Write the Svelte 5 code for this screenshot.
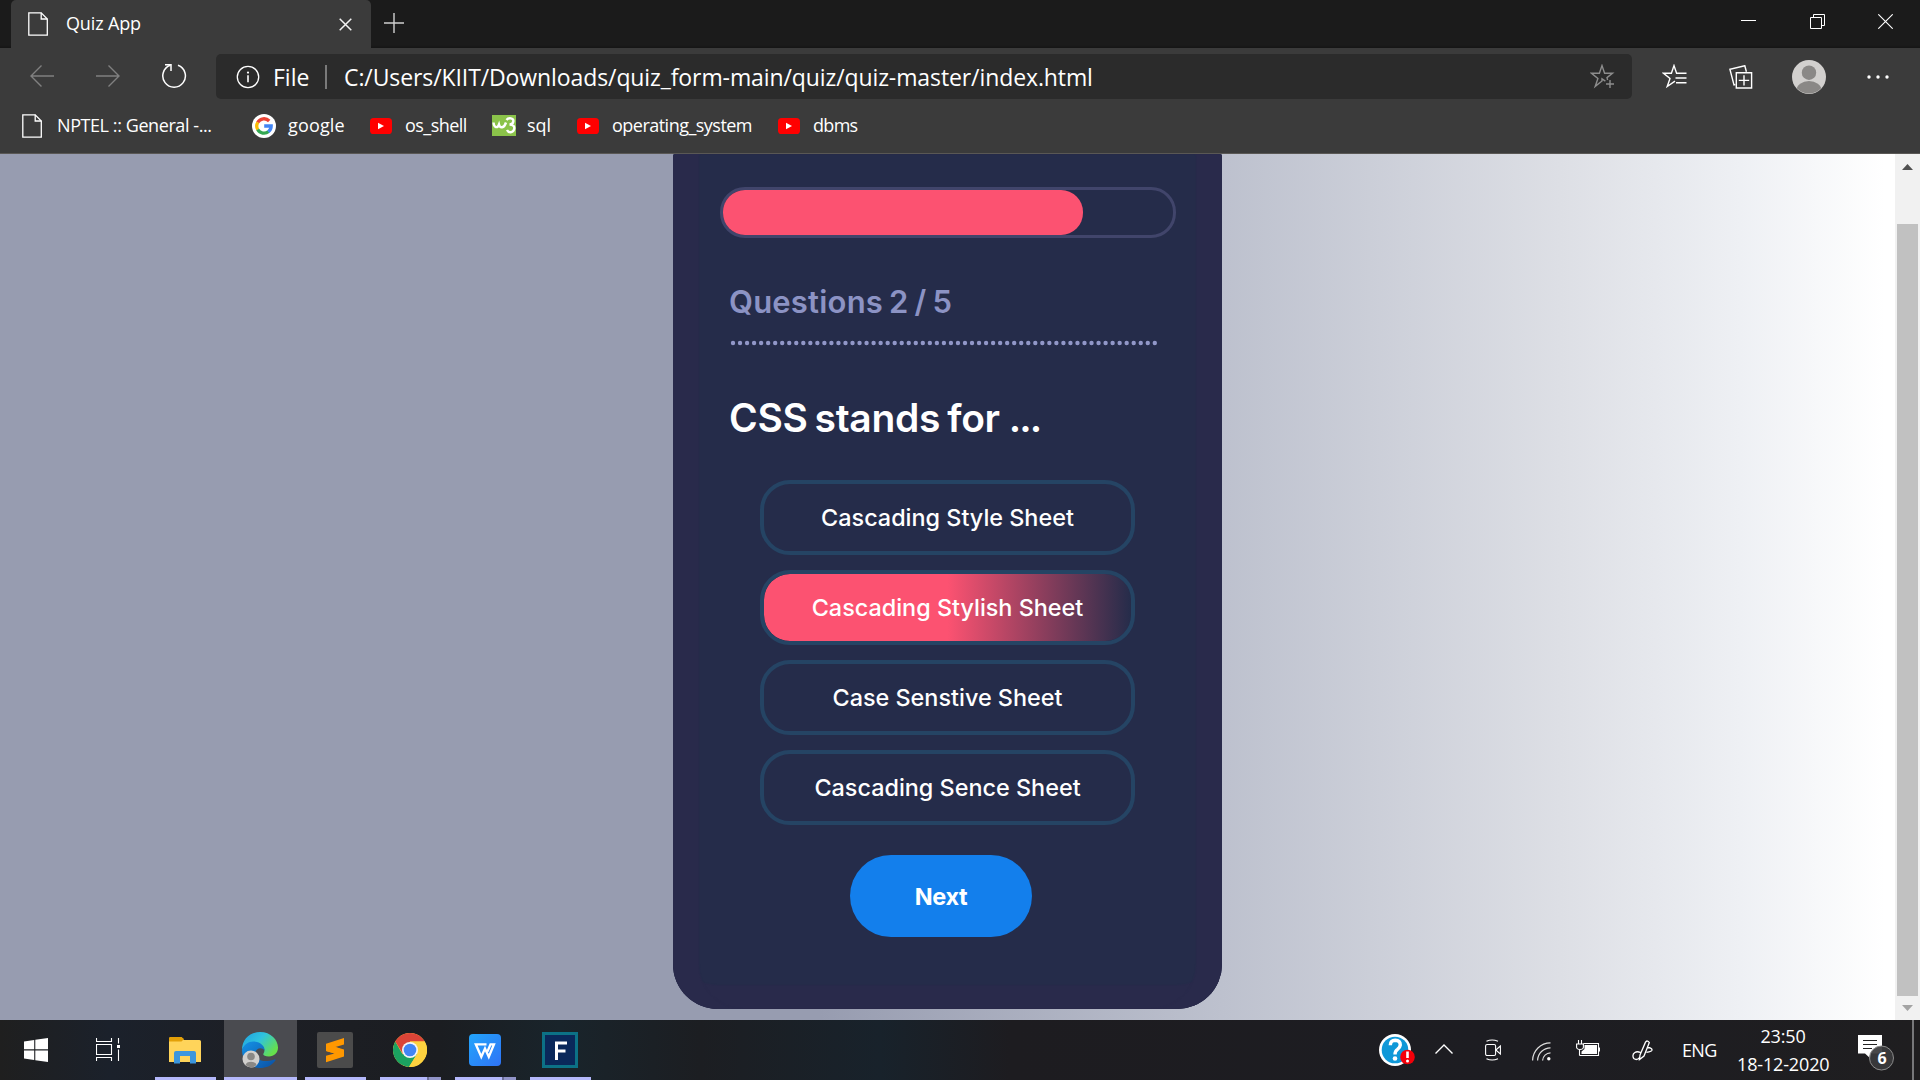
<script>
  const options = [
    { text: 'Cascading Style Sheet', chosen: false },
    { text: 'Cascading Stylish Sheet', chosen: true },
    { text: 'Case Senstive Sheet', chosen: false },
    { text: 'Cascading Sence Sheet', chosen: false }
  ];
  const progress = 80;
</script>

{#snippet page()}
  <svg class="page-icon" viewBox="0 0 20 24" width="20" height="24" fill="none" stroke="#fff" stroke-width="1.3">
    <path d="M.8.8H13.2L19.3 7V23.2H.8Z" />
    <path d="M13.2.8V7H19.3" />
  </svg>
{/snippet}

{#snippet youtube()}
  <svg class="yt" viewBox="0 0 22 16" width="22" height="16">
    <rect width="22" height="16" rx="3.6" fill="#f00" />
    <path d="M8 4.7L14 8L8 11.3Z" fill="#fff" />
  </svg>
{/snippet}

<div class="screen">
  <header class="titlebar">
    <div class="tab">
      {@render page()}
      <span class="tab-title">Quiz App</span>
      <svg class="tab-close" width="13" height="13" viewBox="0 0 13 13" stroke="#f4f4f4" stroke-width="1.5"><path d="M.7.7L12.3 12.3M12.3.7L.7 12.3" /></svg>
    </div>
    <svg class="new-tab" width="20" height="20" viewBox="0 0 20 20" stroke="#d0d0d0" stroke-width="1.4"><path d="M10 0V20M0 10H20" /></svg>
    <div class="window-buttons">
      <svg width="15" height="15" viewBox="0 0 15 15" stroke="#fff"><path d="M0 6.5H15" /></svg>
      <svg width="15" height="15" viewBox="0 0 15 15" fill="none" stroke="#fff"><path d="M.5 3.5H11.5V14.5H.5ZM3.5 3.5V.5H14.5V11.5H11.5" /></svg>
      <svg width="15" height="15" viewBox="0 0 15 15" stroke="#fff" stroke-width="1.1"><path d="M.3.3L14.7 14.7M14.7.3L.3 14.7" /></svg>
    </div>
  </header>

  <div class="toolbar">
    <svg class="back" width="24" height="22" viewBox="0 0 24 22" fill="none" stroke="#808080" stroke-width="1.4"><path d="M11.5.5L1 11L11.5 21.5M1 11H24" /></svg>
    <svg class="forward" width="24" height="22" viewBox="0 0 24 22" fill="none" stroke="#808080" stroke-width="1.4"><path d="M12.5.5L23 11L12.5 21.5M23 11H0" /></svg>
    <svg class="reload" width="26" height="26" viewBox="0 0 26 26" fill="none" stroke="#fff" stroke-width="1.5"><path d="M17 2.3A11.3 11.3 0 1 1 9.2 2.3" /><path d="M4 1.8H10V8" /></svg>
    <div class="address">
      <svg class="info" width="24" height="24" viewBox="0 0 24 24" fill="none" stroke="#fff" stroke-width="1.3"><circle cx="12" cy="12" r="10.7" /><path d="M12 10.2V17.2" stroke-width="1.6" /><circle cx="12" cy="7.6" r="1.1" fill="#fff" stroke="none" /></svg>
      <span class="scheme">File</span>
      <span class="divider"></span>
      <span class="url">C:/Users/KIIT/Downloads/quiz_form-main/quiz/quiz-master/index.html</span>
      <svg class="star" width="25" height="25" viewBox="0 0 25 25" fill="none" stroke="#8d8d8d" stroke-width="1.4"><path d="M15.4 17.1L12 14.8V17L5.2 22.4L7.9 14.5L1.5 9.3H9.4L12 1.6L14.6 9.3H22.5L17 13.6L17.6 16" /><path d="M20 16V24M16 20H24" /></svg>
    </div>
    <svg class="favorites" width="25" height="25" viewBox="0 0 25 25" fill="none" stroke="#fff" stroke-width="1.4"><path d="M13 17.2L5.2 22.5L8 14.5L1.5 9.3H9.4L12 1.6L14.6 9.3H24.5M13.5 14H24.5M14 18.8H24.5" /></svg>
    <svg class="collections" width="24" height="24" viewBox="0 0 24 24" fill="none" stroke="#fff" stroke-width="1.4"><path d="M7.3 7.7H22.6V23H7.3ZM15 10.2V20.5M9.8 15.4H20.2" /><path d="M6.4 19.6L5 20L.9 4.3L15.8.7L17.4 6.8" /></svg>
    <svg class="avatar" width="34" height="34" viewBox="0 0 34 34"><defs><clipPath id="avatar-clip"><circle cx="17" cy="17" r="16.5" /></clipPath></defs><circle cx="17" cy="17" r="17" fill="#d2d0ce" /><circle cx="17" cy="12.7" r="7.2" fill="#8a8886" /><ellipse cx="17" cy="30" rx="12.5" ry="9" fill="#8a8886" clip-path="url(#avatar-clip)" /></svg>
    <svg class="more" width="22" height="4" viewBox="0 0 22 4" fill="#fff"><circle cx="2" cy="2" r="1.7" /><circle cx="11" cy="2" r="1.7" /><circle cx="20" cy="2" r="1.7" /></svg>
  </div>

  <nav class="bookmarks">
    <span class="bm nptel">{@render page()}<span>NPTEL :: General -...</span></span>
    <span class="bm google">
      <svg width="24" height="24" viewBox="0 0 24 24" fill="none" stroke-width="3.3"><circle cx="12" cy="12" r="12" fill="#fff" /><path d="M17.2 7A7.2 7.2 0 0 0 5.7 8.5" stroke="#ea4335" /><path d="M5.8 8.3A7.2 7.2 0 0 0 5.8 15.7" stroke="#fbbc05" /><path d="M5.7 15.5A7.2 7.2 0 0 0 16.6 17.5" stroke="#34a853" /><path d="M16.4 17.7A7.2 7.2 0 0 0 19.2 12H12.2" stroke="#4285f4" /></svg>
      <span>google</span>
    </span>
    <span class="bm shell">{@render youtube()}<span>os_shell</span></span>
    <span class="bm sql">
      <svg width="24" height="21" viewBox="0 0 24 21" fill="none"><rect width="24" height="21" fill="#8bc34a" /><path d="M1.5 7.5C2 13 5.500 13.500 7 9.500C8 13.500 12 13.500 14 7.500" stroke="#fff" stroke-width="2.4" /><path d="M14.500 5C16.500 2.300 22 3 21.300 6.500C21 8.500 19.500 9.500 17.500 9.500C21.500 9.500 23 12 22 14.500C21 18 16.500 18 15 15" stroke="#fff" stroke-width="2.4" /></svg>
      <span>sql</span>
    </span>
    <span class="bm os">{@render youtube()}<span>operating_system</span></span>
    <span class="bm dbms">{@render youtube()}<span>dbms</span></span>
  </nav>

  <main class="viewport">
    <section class="quiz">
      <div class="progress"><div class="fill" style="width:{progress}%"></div></div>
      <h2>Questions 2 / 5</h2>
      <svg class="dots" width="428" height="6" viewBox="0 0 428 6"><path d="M3 3H426" stroke="#9197c8" stroke-width="4.4" stroke-linecap="round" stroke-dasharray="0 7.03" /></svg>
      <h1>CSS stands for <span>...</span></h1>
      <div class="options">
        {#each options as option}
          <button class="option" class:chosen={option.chosen}>{option.text}</button>
        {/each}
      </div>
      <button class="next">Next</button>
    </section>
    <aside class="scrollbar">
      <svg width="11" height="6" viewBox="0 0 11 6"><path d="M5.5 0L11 6H0Z" fill="#505050" /></svg>
      <div class="thumb"></div>
      <svg width="11" height="6" viewBox="0 0 11 6"><path d="M5.500 6L11 0H0Z" fill="#a3a3a3" /></svg>
    </aside>
  </main>

  <footer class="taskbar">
    <div class="slot start">
      <svg width="24" height="24" viewBox="0 0 24 24" fill="#fff"><path d="M0 3.500L10.200 2V11.300H0ZM11.300 1.800L24 0V11.300H11.300ZM0 12.400H10.200V21.900L0 20.500ZM11.300 12.400H24V24L11.300 22.200Z" /></svg>
    </div>
    <div class="slot view">
      <svg width="25" height="24" viewBox="0 0 25 24" fill="none" stroke="#fff" stroke-width="1.100"><path d="M.5 0V3.500H15.500V0M.5 6.500H15.500V16.500H.5ZM.5 23V19.500H15.500V23M22.500 0V5.500M22.500 11.500V23" /><path d="M21 7H24V10H21Z" fill="#fff" stroke="none" /></svg>
    </div>
    <div class="slot app">
      <svg width="32" height="27" viewBox="0 0 32 27"><path d="M0 2Q0 0 2 0H12L15 3H30.500Q32 3 32 4.500V25H0Z" fill="#ffd45a" /><path d="M0 4.500V1.500Q0 0 1.500 0H12.500L15 2L12.500 4.500Z" fill="#e3a008" /><path d="M5 26.500V16Q5 14 7 14H25Q27 14 27 16V26.500H21V19H11V26.500Z" fill="#3c96dd" /></svg>
      <i></i>
    </div>
    <div class="slot app active">
      <svg width="36" height="36" viewBox="0 0 36 36">
        <defs>
          <linearGradient id="edge-top" x1="0" y1="0" x2="1" y2=".6"><stop offset="0" stop-color="#1f9fe0" /><stop offset=".5" stop-color="#2fc3df" /><stop offset="1" stop-color="#66e04c" /></linearGradient>
          <linearGradient id="edge-low" x1="0" y1="0" x2="1" y2="1"><stop offset="0" stop-color="#1492e6" /><stop offset="1" stop-color="#0b50a4" /></linearGradient>
        </defs>
        <path d="M0 18C0 7 8 0 18 0C29 0 36 8 36 15.500C36 21 32 24.500 27 24.500C22.500 24.500 20.500 23 21.500 21.500C24.500 17 20 12 13 11C7 10.500 2 13 0 18Z" fill="url(#edge-top)" />
        <path d="M0 18C2 11 9 8 15 10C20 11.500 23 15 22.500 18.500C20 14.500 14 16 13 21C12 27 20 31.500 32.500 27.500C33.500 27 34 28 33 29C29 34 24 36 18 36C7 36 0 28 0 18Z" fill="url(#edge-low)" />
        <circle cx="9" cy="27" r="8.500" fill="#d2d0ce" /><circle cx="9" cy="24.500" r="3.800" fill="#8a8886" /><path d="M3.500 33C4 28.500 14 28.500 14.500 33Q9 37.500 3.500 33Z" fill="#8a8886" />
      </svg>
      <i></i>
    </div>
    <div class="slot app">
      <svg width="36" height="36" viewBox="0 0 36 36"><rect width="36" height="36" rx="2" fill="#4b4b4b" /><path d="M27 6L9 11.800V19L17.500 21.500L9 23.800V30.200L27 24.500V17.500L18.500 15L27 12.500Z" fill="#ff9800" /><path d="M9 19L17.500 21.500L27 18.500L18.500 15L9 16.500Z" fill="#ff9800" /></svg>
      <i></i>
    </div>
    <div class="slot app">
      <svg width="34" height="34" viewBox="0 0 34 34"><circle cx="17" cy="17" r="17" fill="#fdd23f" /><path d="M17 17L9.500 21.300L2.280 8.500A17 17 0 0 0 16 34L24 21Z" fill="#1ba260" /><path d="M2.280 8.500A17 17 0 0 1 31.700 8.500H17L10 21Z" fill="#db4437" /><path d="M17 17L24 21L16 34A17 17 0 0 0 31.700 8.500H17Z" fill="#fdd23f" /><circle cx="17" cy="17" r="8" fill="#f5f5f5" /><circle cx="17" cy="17" r="6.300" fill="#4285f4" /></svg>
      <i class="stacked"></i>
    </div>
    <div class="slot app">
      <svg width="32" height="32" viewBox="0 0 32 32"><defs><linearGradient id="wps" x2="1" y2="1"><stop stop-color="#22a5fb" /><stop offset="1" stop-color="#2f73f6" /></linearGradient></defs><rect width="32" height="32" rx="4" fill="url(#wps)" /><path d="M17.500 10.300H6.800L12.300 22.800L16 14.500L19.800 22.800L25 10.300H21.500L18.500 17.500" fill="none" stroke="#fff" stroke-width="2.300" /></svg>
      <i class="stacked"></i>
    </div>
    <div class="slot app">
      <svg width="36" height="36" viewBox="0 0 36 36"><rect x="1.500" y="1.500" width="33" height="33" fill="#0a285a" stroke="#0c7186" stroke-width="3" /><path d="M14.500 28V11H25M14.500 19H23.500" fill="none" stroke="#fff" stroke-width="3" /></svg>
      <i></i>
    </div>

    <div class="tray">
      <svg class="help" width="37" height="36" viewBox="0 0 37 36"><circle cx="16" cy="18" r="16" fill="#fff" /><circle cx="16" cy="18" r="13.300" fill="#0f98d8" /><path d="M11.300 13.200Q11.500 8.300 16.200 8.300Q21.300 8.500 21.300 13Q21 15.500 18.500 17.300Q16 19 16 22.500" fill="none" stroke="#fff" stroke-width="3.400" /><circle cx="16" cy="26.500" r="2.300" fill="#fff" /><circle cx="28.500" cy="25" r="7.300" fill="#f40009" /><path d="M28.500 19.500V26" stroke="#fff" stroke-width="2.600" /><circle cx="28.500" cy="29" r="1.500" fill="#fff" /></svg>
      <svg class="chevron" width="18" height="10" viewBox="0 0 18 10" fill="none" stroke="#fff" stroke-width="1.400"><path d="M.5 9.500L9 1L17.500 9.500" /></svg>
      <svg class="camera" width="16" height="22" viewBox="0 0 16 22" fill="none" stroke="#fff" stroke-width="1.100"><rect x=".6" y="5.500" width="10" height="11" rx="1.500" /><path d="M10.800 11L15.400 7V15ZM1.500 2.200Q7 -.3 13 2.200M1.500 19.800Q7 22.300 13 19.800" /></svg>
      <svg class="wifi" width="19" height="19" viewBox="0 0 19 19" fill="none" stroke="#ddd" stroke-width="1.200"><path d="M.6 18.500A18 18 0 0 1 18.500 .8M5.600 18.500A13 13 0 0 1 18.500 5.800M10.600 18.500A8 8 0 0 1 18.500 10.800" /><circle cx="16.800" cy="16.800" r="1.700" fill="#fff" stroke="none" /></svg>
      <svg class="battery" width="24" height="18" viewBox="0 0 24 18" fill="none" stroke="#fff" stroke-width="1.100"><path d="M2.500 0V4M5.500 0V4M.6 4H7.400V7.500Q7 9.500 4 9.500Q1 9.500 .6 7.500ZM3.500 9.500V15.500M7.500 3.500H22.500V15.500H3.500M23.500 7.500V11.500" /><path d="M8.500 5H21V14H5.500V11.500L8.500 9Z" fill="#fff" stroke="none" /></svg>
      <svg class="pen" width="21" height="21" viewBox="0 0 21 21" fill="none" stroke="#fff" stroke-width="1.300"><path d="M7.500 19.500L8 15L13.500 2.200Q15.500 -.3 17.300 2.500L12 16ZM8.500 12.500C4 10.500 .5 13 1 16.500C1.500 20 5.500 20.500 7.500 17.500M15.500 7.500C19 7.500 20.500 9 19.800 10.500C19 12 16.500 11.500 14.500 12.500" /></svg>
      <span class="lang">ENG</span>
      <div class="clock"><span class="time">23:50</span><span class="date">18-12-2020</span></div>
      <div class="action">
        <svg width="36" height="36" viewBox="0 0 36 36"><path d="M0 0H24V18.500H13V24L7 18.500H0Z" fill="#fff" /><path d="M5 5.500H19M5 9.500H19M5 13.500H14" stroke="#222" stroke-width="1.100" /><circle cx="23.500" cy="23" r="12" fill="#3a3a3c" fill-opacity=".93" stroke="#8b8b8b" /></svg>
        <b>6</b>
      </div>
      <span class="peek"></span>
    </div>
  </footer>
</div>

<style>
  :global(body) { margin: 0; overflow: hidden; background: #1b1b1b; }
  svg { display: block; flex: none; }
  span { white-space: nowrap; }
  .screen { width: 1920px; height: 1080px; display: flex; flex-direction: column; overflow: hidden; font-family: 'Open Sans', 'Noto Sans', sans-serif; color: #fff; }

  .titlebar { height: 48px; flex: none; display: flex; align-items: flex-start; background: linear-gradient(#1b1b1b 45px, #151515); }
  .tab { box-sizing: border-box; width: 360px; height: 48px; margin-left: 11px; padding: 0 19px 0 17px; display: flex; align-items: center; background: #3b3b3b; border-radius: 5px 5px 0 0; }
  .tab-title { margin: -2px auto 0 18px; font-size: 18px; letter-spacing: -.15px; }
  .new-tab { margin: 13px 0 0 13px; }
  .window-buttons { display: flex; gap: 53.500px; margin: 14px 27px 0 auto; }

  .toolbar { height: 51px; flex: none; box-sizing: border-box; padding: 6px 31px 0 30px; display: flex; align-items: center; background: #3b3b3b; }
  .back { margin-right: 42px; }
  .forward { margin-right: 41px; }
  .reload { margin-right: 29px; }
  .back, .forward, .reload { margin-top: -2px; }
  .address { flex: none; box-sizing: border-box; width: 1416px; height: 45px; padding: 0 17px 0 20px; display: flex; align-items: center; background: #2b2b2b; border-radius: 5px; font-size: 23px; }
  .scheme { margin-left: 13px; width: 38px; }
  .divider { width: 2px; height: 24px; margin: 0 17px 0 14px; background: #7a7a7a; }
  .url { letter-spacing: -.1px; margin-right: auto; }
  .favorites { margin-left: 30px; }
  .collections { margin-left: 42px; }
  .avatar { margin-left: 39px; }
  .more { margin-left: 41px; }

  .bookmarks { height: 55px; flex: none; box-sizing: border-box; padding: 0 0 1px 22px; display: flex; align-items: center; background: #3b3b3b; border-bottom: 1px solid #5a5855; font-size: 18px; }
  .bm { display: flex; align-items: center; flex: none; }
  .bm > span { margin-top: -1px; }
  .nptel { width: 230px; gap: 15px; letter-spacing: -.42px; }
  .google { width: 118px; gap: 12px; letter-spacing: .15px; }
  .shell { width: 122px; gap: 13px; letter-spacing: -.55px; }
  .sql { width: 85px; gap: 11px; letter-spacing: -.1px; }
  .os { width: 201px; gap: 13px; letter-spacing: -.52px; }
  .dbms { gap: 13px; letter-spacing: -.7px; }

  .viewport { height: 866px; flex: none; display: flex; background: linear-gradient(90deg, #979cb0 0, #979cb0 820px, #bdc1ce 1222px, #dddfe5 1560px, #eef0f4 1740px, #fff 1885px); }
  .quiz { box-sizing: border-box; width: 549px; height: 855px; margin-left: 673px; padding: 33px 46px 0 47px; background: #252c4a; border-radius: 2px 2px 45px 45px; box-shadow: inset 26px 0 1px #292a4b, inset -26px 0 1px #292a4b, inset 0 -24px 1px #292a4b; font-family: Inter, sans-serif; }
  .progress { box-sizing: border-box; height: 51px; border: 3px solid #41456b; border-radius: 25px; }
  .fill { height: 100%; background: #fc5271; border-radius: 22px; }
  h2 { margin: 44px 0 0 9px; font-size: 31px; line-height: 40px; font-weight: 600; letter-spacing: .2px; word-spacing: -2px; color: #8c93c4; }
  .dots { margin: 18px 0 0 10px; }
  h1 { margin: 47px 0 0 9px; font-size: 39px; line-height: 50px; font-weight: 600; letter-spacing: -.3px; word-spacing: -2.500px; white-space: nowrap; }
  h1 span { letter-spacing: -2px; margin-left: 2px; }
  button { display: block; border: 0; padding: 0; color: #fff; font-family: inherit; font-size: 23.500px; }
  .options { margin: 37px 0 0 40px; width: 375px; display: flex; flex-direction: column; gap: 15px; }
  .option { height: 75px; border: 4px solid #254464; border-radius: 30px; background: none; font-weight: 500; font-size: 23.400px; }
  .chosen { background: linear-gradient(90deg, #fc5271 50%, #252c4a) padding-box; }
  .next { width: 182px; height: 82px; margin: 30px 0 0 130px; border-radius: 41px; background: #137fec; font-weight: 700; letter-spacing: -.4px; }

  .scrollbar { box-sizing: border-box; width: 25px; margin-left: auto; padding: 10px 1px 9px 0; background: #f1f1f1; display: flex; flex-direction: column; align-items: center; }
  .thumb { width: 21px; height: 772px; margin: 54px 0 9px; background: #c1c1c1; }

  .taskbar { height: 60px; flex: none; display: flex; background: linear-gradient(90deg, #1f1f1f 0, #1b212b 110px, #1d1f25 260px, #1b1d21 440px, #19242b 560px, #1c1e22 700px, #18222b 880px, #1d1c20 1010px, #1d1d22 1500px, #1f1e20 1920px); }
  .slot { box-sizing: border-box; width: 73px; height: 60px; display: flex; flex-direction: column; align-items: center; justify-content: center; position: relative; flex: none; }
  .start { width: 72px; }
  .view { width: 77px; padding-right: 4px; }
  .app { margin-right: 2px; padding-right: 1px; }
  .active { background: #4a4b50; }
  .slot i { position: absolute; left: 6px; right: 6px; bottom: 0; height: 3px; background: #b4b8fb; }
  .active i { left: 0; right: 0; }
  .slot .stacked { background: linear-gradient(90deg, #b4b8fb 47px, #6c6f97 47px 49px, #9194c8 49px); }
  .tray { flex: none; margin-left: auto; width: 541px; height: 60px; display: flex; align-items: center; }
  .chevron { margin: -3px 0 0 19px; }
  .camera { margin-left: 32px; }
  .wifi { margin: 2px 0 0 31px; }
  .battery { margin: -2px 0 0 25px; }
  .pen { margin-left: 32px; }
  .lang { margin-left: 29px; font-size: 18px; letter-spacing: -.7px; width: 36px; }
  .clock { margin-left: 19px; width: 92px; text-align: center; display: flex; flex-direction: column; line-height: 28px; font-size: 18px; letter-spacing: -.15px; }
  .action { position: relative; margin: 6px 0 0 29px; }
  .action b { position: absolute; left: 12px; top: 11px; width: 24px; text-align: center; font-size: 16px; line-height: 24px; font-weight: 700; }
  .peek { width: 2px; height: 60px; margin: 0 6px 0 auto; background: #77777a; }
</style>
